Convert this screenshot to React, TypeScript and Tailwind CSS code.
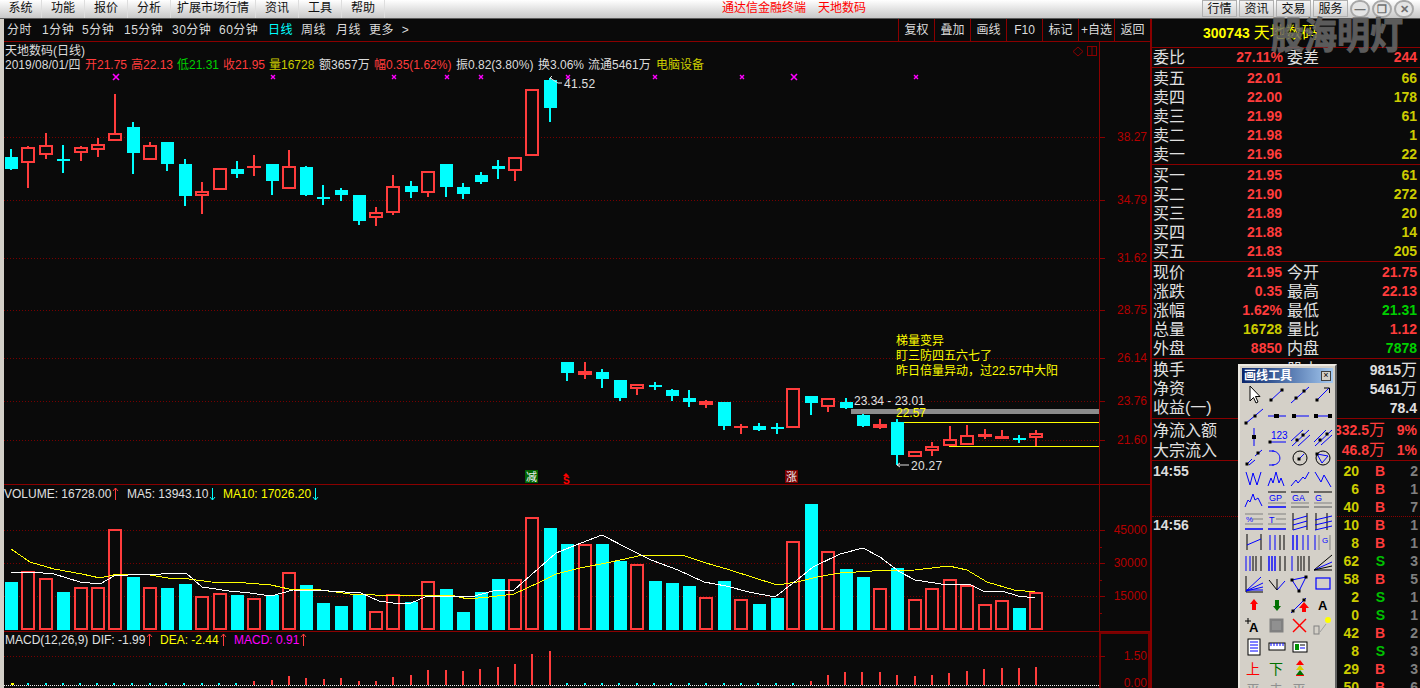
import React from "react";

const RED = "#ff3c3c";
const CYAN = "#00ffff";
const BG = "#0a0a0a";
const GRID = "#8a0000";

type C = [number, number, number, number, number, "u" | "d"];
const candles: C[] = [
  [11, 149, 157, 169, 170, "d"], [28, 146, 147, 163, 188, "u"], [46, 133, 145, 155, 159, "u"], [63, 145, 159, 161, 173, "d"],
  [81, 146, 147, 153, 161, "u"], [98, 138, 144, 150, 157, "u"], [115, 94, 133, 141, 141, "u"], [133, 122, 127, 153, 174, "d"],
  [150, 142, 145, 160, 160, "u"], [167, 142, 142, 164, 171, "d"], [185, 159, 164, 196, 206, "d"], [202, 182, 191, 196, 214, "u"],
  [220, 168, 168, 190, 190, "u"], [237, 161, 169, 174, 178, "d"], [254, 155, 166, 168, 176, "u"], [272, 164, 164, 181, 195, "d"],
  [289, 150, 166, 189, 189, "u"], [306, 166, 167, 195, 196, "d"], [323, 185, 197, 199, 205, "d"], [341, 188, 190, 195, 201, "d"],
  [359, 195, 195, 221, 225, "d"], [376, 207, 212, 218, 226, "u"], [393, 175, 186, 213, 215, "u"], [411, 181, 186, 192, 198, "d"],
  [428, 171, 171, 193, 197, "u"], [446, 164, 164, 187, 197, "d"], [463, 183, 187, 194, 199, "d"], [481, 172, 175, 182, 184, "d"],
  [498, 160, 166, 169, 179, "d"], [515, 157, 157, 171, 181, "u"], [532, 89, 89, 156, 156, "u"], [550, 78, 80, 108, 122, "d"],
  [567, 362, 362, 373, 381, "d"], [585, 362, 371, 375, 379, "u"], [602, 369, 372, 379, 388, "d"], [620, 380, 380, 398, 401, "d"],
  [637, 384, 384, 389, 395, "u"], [655, 382, 385, 387, 390, "d"], [672, 389, 390, 396, 401, "d"], [689, 390, 398, 402, 407, "d"],
  [706, 400, 401, 405, 408, "u"], [724, 402, 402, 426, 430, "d"], [741, 424, 426, 428, 434, "u"], [759, 423, 426, 430, 431, "d"],
  [777, 423, 427, 429, 434, "d"], [793, 388, 388, 428, 428, "u"], [811, 396, 396, 403, 415, "d"], [828, 398, 398, 407, 412, "u"],
  [846, 398, 402, 408, 409, "d"], [863, 414, 415, 426, 427, "d"], [880, 419, 424, 428, 429, "u"], [897, 419, 422, 455, 465, "d"],
  [915, 451, 451, 457, 457, "u"], [932, 442, 446, 451, 456, "u"], [950, 426, 439, 446, 446, "u"], [967, 425, 435, 445, 445, "u"],
  [985, 429, 434, 437, 439, "u"], [1002, 430, 436, 439, 439, "u"], [1019, 435, 438, 440, 443, "d"], [1036, 430, 433, 438, 446, "u"],
];

const volTops = [582, 571, 578, 592, 587, 587, 529, 577, 587, 588, 584, 596, 593, 595, 598, 595, 572, 585, 603, 606, 595, 611, 594, 602, 581, 589, 612, 592, 579, 579, 517, 528, 544, 544, 544, 561, 564, 581, 583, 586, 597, 581, 599, 604, 598, 541, 504, 551, 569, 577, 588, 568, 599, 588, 579, 585, 604, 600, 608, 592];

const white = "11,572 32,572 54,574 80,582 100,584 114,576 143,574 161,574 186,573 202,587 229,591 250,593 271,596 293,590 329,591 361,593 379,601 393,603 411,603 425,597 450,596 471,597 493,591 514,590 539,568 556,553 576,545 602,535 627,548 651,560 678,570 704,582 726,586 749,592 775,597 797,580 813,567 840,554 863,548 880,557 900,572 915,580 941,584 971,585 983,591 1002,591 1018,596 1035,598";
const yellow = "11,549 30,562 54,569 82,574 100,578 118,574 150,575 168,578 189,579 211,582 246,583 271,585 289,589 321,590 350,594 375,595 404,596 429,595 450,595 468,599 489,597 514,594 540,582 556,574 580,568 611,562 643,555 682,555 706,563 730,570 777,585 797,582 817,577 840,573 872,571 915,570 949,566 967,570 987,582 1014,590 1035,592";

const macdRed: [number, number][] = [[254, 681], [272, 680], [289, 676], [306, 678], [324, 679], [341, 678], [359, 681], [376, 681], [393, 677], [411, 675], [428, 670], [446, 670], [463, 671], [480, 669], [498, 667], [515, 664], [532, 654], [550, 651], [811, 681], [828, 675], [845, 672], [862, 672], [880, 672], [897, 675], [915, 676], [932, 675], [949, 673], [967, 671], [984, 669], [1002, 668], [1019, 668], [1036, 667]];
const macdCyan = [28, 46, 63, 80, 97, 114, 132, 150, 166, 184, 202, 219, 236, 567, 585, 602, 619, 637, 654, 671, 689, 706, 724, 741, 758, 776, 793];

function Candle({ c }: { c: C }) {
  const [x, wt, bt, bb, wb, t] = c;
  if (t === "d")
    return (
      <g fill={CYAN}>
        <rect x={x - 1} y={wt} width={2} height={wb - wt} />
        <rect x={x - 6} y={bt} width={13} height={Math.max(bb - bt, 2)} />
      </g>
    );
  return (
    <g>
      <rect x={x - 1} y={wt} width={2} height={wb - wt} fill={RED} />
      {bb - bt <= 4 ? (
        <rect x={x - 7} y={bt} width={14} height={Math.max(bb - bt, 2)} fill={RED} />
      ) : (
        <rect x={x - 6} y={bt + 1} width={12} height={bb - bt - 2} fill={BG} stroke={RED} strokeWidth={2} />
      )}
    </g>
  );
}

function Mark({ x, big }: { x: number; big?: boolean }) {
  const r = big ? 3 : 2;
  return (
    <path d={`M${x - r} ${77 - r}L${x + r} ${77 + r}M${x + r} ${77 - r}L${x - r} ${77 + r}`} stroke="#ff00ff" strokeWidth={big ? 1.6 : 1.4} fill="none" />
  );
}

function Ax({ y, t }: { y: number; t: string }) {
  return (
    <>
      <rect x={1099} y={y} width={6} height={1} fill={GRID} />
      <text x={1147} y={y + 4} textAnchor="end" fontSize={12} fill="#b40000">{t}</text>
    </>
  );
}

function Dots({ y, color = "#760000" }: { y: number; color?: string }) {
  return <line x1={4} x2={1099} y1={y + 0.5} y2={y + 0.5} stroke={color} strokeDasharray="1 2" />;
}

const MainChart = () => (
  <svg viewBox="4 42 1146 442" className="absolute inset-0 w-[1146px] h-[442px]">
    <g shapeRendering="crispEdges">
      {[137, 200, 258, 310, 358, 401, 440].map((y) => <Dots key={y} y={y} />)}
      <rect x={1099} y={42} width={1} height={442} fill={GRID} />
      <rect x={851} y={409} width={248} height={5} fill="#8c8c8c" />
      <rect x={897} y={422} width={202} height={1} fill="#ffff00" />
      <rect x={949} y={446} width={150} height={1} fill="#ffff00" />
      {candles.map((c) => <Candle key={c[0]} c={c} />)}
    </g>
    {[[137, "38.27"], [200, "34.79"], [258, "31.62"], [310, "28.75"], [358, "26.14"], [401, "23.76"], [440, "21.60"]].map(([y, t]) => (
      <Ax key={t as string} y={y as number} t={t as string} />
    ))}
    <path d="M1073 51.5l5 -4.5l5 4.5l-5 4.5z" fill="none" stroke="#8a0000" />
    <rect x={1087.5} y={46.5} width={9} height={9} fill="none" stroke="#8a0000" />
    <line x1={1092} x2={1092} y1={46} y2={56} stroke="#8a0000" />
    {[[116, 1], [273, 0], [394, 0], [447, 0], [481, 0], [568, 0], [655, 0], [742, 0], [794, 1], [916, 0]].map(([x, b]) => (
      <Mark key={x} x={x} big={!!b} />
    ))}
    <path d="M552 79l-2 -1l2 -2M550 78l8 5h4M897 465h12M897 465l3 -2M897 465l3 2" stroke="#e0e0e0" fill="none" />
    <text x={564} y={88} fontSize={12} fill="#e0e0e0" letterSpacing={0.3}>41.52</text>
    <text x={911} y={470} fontSize={12} fill="#e0e0e0" letterSpacing={0.3}>20.27</text>
    <text x={854} y={405} fontSize={12} fill="#e0e0e0">23.34 - 23.01</text>
    <text x={896} y={417} fontSize={12} fill="#ffff00">22.57</text>
    <g fontSize={12} fill="#ffff00">
      <text x={896} y={345}>梯量变异</text>
      <text x={896} y={360}>盯三防四五六七了</text>
      <text x={896} y={375}>昨日倍量异动，过22.57中大阳</text>
    </g>
    <rect x={525} y={470} width={13} height={13} fill="#006400" />
    <text x={526} y={481} fontSize={11} fill="#f0f0f0">减</text>
    <path d="M566 473l-3 3h6z" fill="#ff0000" />
    <text x={563} y={484} fontSize={10} fontWeight={700} fill="#ff0000">S</text>
    <rect x={785} y={470} width={13} height={13} fill="#7a0000" />
    <text x={786} y={481} fontSize={11} fill="#f0f0f0">涨</text>
  </svg>
);

const VolChart = () => (
  <svg viewBox="4 485 1146 146" className="absolute inset-0 w-[1146px] h-[146px]">
    <g shapeRendering="crispEdges">
      {[530, 563, 596].map((y) => <Dots key={y} y={y} />)}
      <rect x={1099} y={485} width={1} height={146} fill={GRID} />
      {[547, 580, 613].map((y) => <rect key={y} x={1099} y={y} width={3} height={1} fill={GRID} />)}
      {candles.map((c, i) => {
        const x = c[0];
        const top = volTops[i];
        return c[5] === "d" ? (
          <rect key={x} x={x - 6} y={top} width={13} height={630 - top} fill={CYAN} />
        ) : (
          <rect key={x} x={x - 6} y={top + 1} width={12} height={629 - top - 1} fill={BG} stroke={RED} strokeWidth={2} />
        );
      })}
      <polyline points={yellow} fill="none" stroke="#ffff00" />
      <polyline points={white} fill="none" stroke="#ffffff" />
    </g>
    <Ax y={530} t="45000" />
    <Ax y={563} t="30000" />
    <Ax y={596} t="15000" />
  </svg>
);

const MacdChart = () => (
  <svg viewBox="4 632 1146 56" className="absolute inset-0 w-[1146px] h-[56px]">
    <g shapeRendering="crispEdges">
      <Dots y={656} />
      <line x1={4} x2={1099} y1={685.5} y2={685.5} stroke="#e8e8e8" strokeDasharray="1 1" />
      <rect x={1099} y={632} width={2} height={56} fill="#7a0000" />
      <rect x={1099} y={632} width={51} height={2} fill="#7a0000" />
      <rect x={1148} y={632} width={2} height={56} fill="#7a0000" />
      {macdRed.map(([x, t]) => <rect key={x} x={x - 1} y={t} width={2} height={685 - t} fill={RED} />)}
      {macdCyan.map((x) => <rect key={x} x={x - 1} y={683} width={2} height={2} fill={CYAN} />)}
      <rect x={11} y={683} width={3} height={2} fill="#ffff00" />
    </g>
    <Ax y={656} t="1.50" />
    <text x={1147} y={687} textAnchor="end" fontSize={12} fill="#b40000">0.00</text>
  </svg>
);

const B = "#0000ff";
const K = "#000000";
const L = (x1: number, y1: number, x2: number, y2: number, c = B, w = 1) => <line x1={x1} y1={y1} x2={x2} y2={y2} stroke={c} strokeWidth={w} />;
const D = (x: number, y: number) => <rect x={x - 1.5} y={y - 1.5} width={3} height={3} fill={K} />;
const P = (d: string, c = B, w = 1) => <path d={d} fill="none" stroke={c} strokeWidth={w} />;
const T = (x: number, y: number, t: string, c = B, s = 9) => <text x={x} y={y} fontSize={s} fill={c}>{t}</text>;

const icons: React.ReactNode[] = [
  <path d="M7 1V16L10.5 12.5L13 18L15 17L12.5 11.5H17Z" fill="#fff" stroke={K} />,
  <>{L(4, 16, 17, 4)}{D(5, 15)}{D(16, 5)}</>,
  <>{L(2, 18, 20, 2)}{D(7, 13)}{D(15, 6)}</>,
  <>{L(4, 16, 17, 3)}{P("M12 3H17.5V8", K)}{D(5, 15)}</>,
  <>{L(2, 18, 20, 3)}{D(3, 17)}{D(12, 10)}</>,
  <>{L(2, 10, 20, 10)}<rect x={8} y={8} width={5} height={4} fill={K} /></>,
  <>{L(5, 10, 20, 10)}<rect x={3} y={8} width={4} height={4} fill={K} /></>,
  <>{L(4, 10, 18, 10)}<rect x={2} y={8} width={4} height={4} fill={K} /><rect x={16} y={8} width={4} height={4} fill={K} /></>,
  <>{L(11, 1, 11, 19)}<rect x={9} y={8} width={4} height={4} fill={K} /></>,
  <>{T(5, 12, "123", B, 10)}{L(4, 15, 20, 15)}{D(4, 15)}</>,
  <>{L(2, 14, 14, 3)}{L(3, 19, 20, 3)}{L(9, 19, 21, 8)}{D(8, 13)}{D(14, 8)}</>,
  <>{L(2, 15, 14, 3)}{L(3, 19, 20, 3)}{L(9, 18, 20, 8)}{D(8, 13)}{D(15, 7)}</>,
  <>{L(3, 17, 9, 11)}{L(12, 8, 19, 2)}{L(6, 17, 12, 12)}{D(4, 16)}{D(15, 5)}</>,
  <>{P("M6 3C16 3 17 17 6 17")}{L(3, 17, 8, 17)}{L(3, 3, 8, 3)}</>,
  <><circle cx={11} cy={10} r={7} fill="none" stroke={K} />{L(10, 11, 15, 6)}{D(10, 11)}</>,
  <><circle cx={11} cy={10} r={7} fill="none" stroke={K} />{P("M5 6L16 8L10 15Z")}{D(5, 6)}</>,
  <>{P("M3 3L7 16L10 4L14 16L18 3")}</>,
  <>{P("M2 17L5 9L7 14L10 3L13 14L15 9L18 17")}</>,
  <>{P("M2 17L7 11L9 14L14 8L16 10L20 3")}</>,
  <>{P("M3 3L9 13L12 6L19 18")}</>,
  <>{P("M2 17L5 10L7 12L10 4L12 10L15 8L19 16")}</>,
  <>{L(2, 2, 20, 2, K)}{T(3, 11, "GP")}{L(2, 13, 20, 13, "#808080")}{L(2, 17, 20, 17, B, 1.5)}</>,
  <>{L(2, 2, 20, 2, K)}{T(3, 11, "GA")}{L(2, 13, 20, 13, "#808080")}{L(2, 17, 20, 17, "#808080", 1.5)}</>,
  <>{L(2, 2, 20, 2, K)}{T(3, 11, "G")}{L(2, 13, 20, 13, "#808080")}{L(2, 17, 20, 17, "#808080", 1.5)}</>,
  <>{L(2, 3, 20, 3, "#808080")}{T(3, 11, "%", B, 8)}{L(10, 8, 20, 8, "#808080")}{L(2, 13, 20, 13, "#808080")}{L(2, 18, 20, 18, B, 1.5)}</>,
  <>{L(2, 3, 20, 3, "#808080")}{T(3, 12, "T", B, 9)}{L(10, 8, 20, 8, "#808080")}{L(2, 13, 20, 13, "#808080")}{L(2, 18, 20, 18, B, 1.5)}</>,
  <>{L(4, 2, 4, 19, K)}{L(18, 2, 18, 19, K)}{L(4, 9, 18, 5, B)}{L(4, 14, 18, 10, B)}{L(4, 19, 18, 15, B)}</>,
  <>{L(4, 2, 4, 19, K)}{L(15, 2, 15, 19, K)}{L(3, 9, 20, 5, B)}{L(3, 14, 20, 10, B)}{L(3, 19, 20, 15, B)}</>,
  <>{L(4, 2, 4, 18, K)}{L(18, 2, 18, 18, K)}{L(4, 13, 18, 7, B)}</>,
  <>{L(4, 3, 4, 18)}{L(9, 3, 9, 18)}{L(14, 3, 14, 18, K)}{L(18, 3, 18, 18, K)}</>,
  <>{L(4, 3, 4, 18, B, 1.4)}{L(8, 3, 8, 18, B, 1.4)}{L(14, 3, 14, 18, B)}{L(19, 3, 19, 18)}</>,
  <>{L(3, 3, 3, 18, B)}{L(7, 3, 7, 18, "#808080")}{T(10, 11, "G", B, 8)}{L(18, 3, 18, 18, "#808080")}</>,
  <>{L(3, 3, 3, 18)}{L(7, 3, 7, 18)}{L(10, 3, 10, 18, K)}{L(13, 3, 13, 18, K)}{L(18, 3, 18, 18, K)}</>,
  <>{L(3, 3, 3, 18, B, 1.4)}{L(6, 3, 6, 18, B, 1.4)}{L(9, 3, 9, 18, B, 1.4)}{L(14, 3, 14, 18, K)}{L(19, 3, 19, 18, K)}</>,
  <>{L(3, 3, 3, 18)}{L(9, 3, 9, 18, K)}{L(12, 3, 12, 18, K)}{L(15, 3, 15, 18, K)}{L(20, 3, 20, 18, K)}</>,
  <>{L(2, 17, 20, 2, K)}{L(2, 17, 20, 9, B)}{L(2, 17, 20, 13, K)}{L(2, 17, 20, 17, K)}</>,
  <>{L(3, 2, 3, 18, K)}{L(3, 18, 20, 18, K)}{L(3, 16, 20, 16, B)}{L(3, 17, 18, 3, B)}{L(3, 17, 20, 9, B)}{L(3, 17, 20, 13, B)}</>,
  <>{L(3, 6, 11, 16, K)}{L(11, 16, 19, 7, B)}{L(11, 5, 11, 16, K)}</>,
  <>{P("M3 6L17 3L10 17Z")}{D(3, 6)}{D(17, 3)}{D(10, 17)}</>,
  <rect x={4} y={4} width={14} height={11} fill="none" stroke={B} strokeWidth={1.2} />,
  <><path d="M11 4L15 9H13V15H9V9H7Z" fill="#ff0000" /></>,
  <><path d="M11 16L15 11H13V5H9V11H7Z" fill="#007000" /></>,
  <>{L(2, 18, 17, 3, B)}{D(4, 16)}{D(15, 5)}<path d="M15 7L20 13H17V17H13V13H10Z" fill="#ff0000" /></>,
  <text x={6} y={15} fontSize={13} fontWeight={700} fill={K}>A</text>,
  <><text x={6} y={16} fontSize={13} fontWeight={700} fill={K}>A</text>{P("M2 5H8M5 2V8", K)}</>,
  <><rect x={4.5} y={3.5} width={12} height={12} fill="#808080" stroke="#808080" strokeWidth={2} /><rect x={6} y={5} width={9} height={9} fill="#909090" /></>,
  <>{L(4, 3, 17, 16, "#ff0000", 1.5)}{L(17, 3, 4, 16, "#ff0000", 1.5)}</>,
  <><circle cx={16} cy={4} r={3} fill="#ffff00" /><rect x={2} y={10} width={5} height={8} fill="#d4d0c8" stroke="#808080" />{L(8, 16, 14, 8, "#a0a0a0")}</>,
  <><rect x={5} y={2} width={12} height={16} fill="#fff" stroke={K} />{L(7, 5, 15, 5)}{L(7, 8, 15, 8)}{L(7, 11, 15, 11)}{L(7, 14, 15, 14)}</>,
  <><rect x={3} y={6} width={16} height={7} fill="#fff" stroke={K} />{P("M5 6V9M8 6V9M11 6V9M14 6V9M17 6V9")}</>,
  <><rect x={4} y={5} width={14} height={10} fill="#fff" stroke={K} /><rect x={6} y={7} width={4} height={6} fill="#009000" />{L(11, 8, 16, 8, K)}{L(11, 11, 16, 11, B)}</>,
  null,
  <text x={3} y={16} fontSize={14} fill="#ff0000">上</text>,
  <text x={3} y={16} fontSize={14} fill="#007000">下</text>,
  <><path d="M11 2L15 7H7Z" fill="#ff0000" /><path d="M11 7L15 12H7Z" fill="#d8d000" /><path d="M11 12L15 17H7Z" fill="#007000" /><rect x={7} y={17} width={8} height={1} fill="#ff0000" /></>,
  null,
  <text x={3} y={16} fontSize={14} fill="#909090">平</text>,
  <text x={3} y={16} fontSize={14} fill="#909090">击</text>,
  <text x={3} y={16} fontSize={14} fill="#909090">平</text>,
  null,
];

const Toolbar = () => (
  <div className="absolute left-[1238px] top-[364px] w-[99px] h-[330px] bg-[#d4d0c8] border-2 border-t-[#ece9e2] border-l-[#ece9e2] border-r-[#606060] border-b-[#606060] p-[2px]">
    <div className="h-[15px] flex items-center justify-between bg-gradient-to-r from-[#0a246a] to-[#a6caf0] pl-[2px] pr-[2px]">
      <span className="text-white text-[12px] leading-none font-bold">画线工具</span>
      <span className="w-[10px] h-[10px] bg-[#d4d0c8] border border-[#404040] flex items-center justify-center text-[9px] leading-none text-black">×</span>
    </div>
    <div className="grid grid-cols-[repeat(4,23px)] auto-rows-[21px] mt-[1px]">
      {icons.map((ic, i) => (
        <div key={i} className="flex items-center justify-center">
          {ic && <svg viewBox="0 0 22 20" className="w-[22px] h-[20px]">{ic}</svg>}
        </div>
      ))}
    </div>
  </div>
);

const Tab = ({ w, t, on }: { w: string; t: string; on?: boolean }) => (
  <span className={`${w} shrink-0 tracking-[0.5px] whitespace-pre ${on ? "text-[#00ffff]" : "text-[#dcdcdc]"}`}>{t}</span>
);

const TabBar = () => (
  <div className="h-[23px] shrink-0 flex items-stretch border-b border-[#8a0000] text-[12px] leading-[22px]">
    <div className="flex-1 flex pl-[3px]">
      <Tab w="w-[35px]" t="分时" />
      <Tab w="w-[40px]" t="1分钟" />
      <Tab w="w-[42px]" t="5分钟" />
      <Tab w="w-[48px]" t="15分钟" />
      <Tab w="w-[47px]" t="30分钟" />
      <Tab w="w-[49px]" t="60分钟" />
      <Tab w="w-[33px]" t="日线" on />
      <Tab w="w-[35px]" t="周线" />
      <Tab w="w-[33px]" t="月线" />
      <Tab w="w-[50px]" t="更多  >" />
    </div>
    {["复权", "叠加", "画线", "F10", "标记", "+自选", "返回"].map((t) => (
      <span key={t} className="w-[36px] text-center border-l border-[#8a0000] text-[#dcdcdc] text-[12px]">{t}</span>
    ))}
  </div>
);

const TitleBar = () => (
  <div className="h-[19px] shrink-0 flex items-stretch bg-gradient-to-b from-[#ffffff] to-[#c8c8c8] border-b border-[#5a5a5a] text-[12px] leading-[17px] text-[#111]">
    <div className="flex">
      {[["w-[42px]", "系统"], ["w-[43px]", "功能"], ["w-[43px]", "报价"], ["w-[43px]", "分析"], ["w-[85px]", "扩展市场行情"], ["w-[43px]", "资讯"], ["w-[43px]", "工具"], ["w-[43px]", "帮助"]].map(([w, t]) => (
        <span key={t} className={`${w} text-center border-r border-[#dedede]`}>{t}</span>
      ))}
    </div>
    <div className="flex-1 pl-[337px] text-[#ff0000] whitespace-nowrap">通达信金融终端<span className="ml-[12px]">天地数码</span></div>
    <div className="flex gap-[2px] items-start mr-[2px]">
      {["行情", "资讯", "交易", "服务"].map((t) => (
        <span key={t} className="w-[35px] h-[17px] text-center border border-[#b0b0b0] bg-gradient-to-b from-[#f4f4f4] to-[#d0d0d0]">{t}</span>
      ))}
    </div>
    <div className="flex gap-[2px] items-start mr-[6px]">
      {["—", "❐", "✕"].map((t) => (
        <span key={t} className="w-[20px] h-[18px] rounded-full border-2 border-[#a8a8a8] bg-[#e4e4e4] text-[#707070] text-[11px] leading-[14px] text-center font-bold">{t}</span>
      ))}
    </div>
  </div>
);

const Leg = ({ w, k, v, c }: { w: string; k: string; v: string; c: string }) => (
  <span className={`${w} shrink-0 whitespace-nowrap ${c}`}>{k}{v}</span>
);

const Legend = () => (
  <div className="absolute left-[1px] top-[2px] text-[12px] leading-[14px] text-[#dcdcdc]">
    <div>天地数码(日线)</div>
    <div className="flex">
      <span className="w-[80px] shrink-0">2019/08/01/四</span>
      <Leg w="w-[46px]" k="开" v="21.75" c="text-[#ff3c3c]" />
      <Leg w="w-[46px]" k="高" v="22.13" c="text-[#ff3c3c]" />
      <Leg w="w-[46px]" k="低" v="21.31" c="text-[#00d000]" />
      <Leg w="w-[46px]" k="收" v="21.95" c="text-[#ff3c3c]" />
      <Leg w="w-[50px]" k="量" v="16728" c="text-[#cccc00]" />
      <Leg w="w-[55px]" k="额" v="3657万" c="text-[#dcdcdc]" />
      <Leg w="w-[82px]" k="幅" v="0.35(1.62%)" c="text-[#ff3c3c]" />
      <span className="w-[82px] shrink-0">振0.82(3.80%)</span>
      <span className="w-[50px] shrink-0">换3.06%</span>
      <span className="w-[68px] shrink-0">流通5461万</span>
      <span className="w-[50px] shrink-0 text-[#cccc00]">电脑设备</span>
    </div>
  </div>
);

const Arrow = ({ c, up }: { c: string; up?: boolean }) => (
  <svg viewBox="0 0 7 14" className={`inline-block w-[7px] h-[14px] ml-[1px] align-[-3px] ${c}`}>
    <path d={up ? "M3.5 1V13M1 4L3.5 1L6 4" : "M3.5 1V13M1 10L3.5 13L6 10"} fill="none" stroke="currentColor" />
  </svg>
);

const Quote = ({ k, v, q }: { k: string; v: string; q: string }) => (
  <div className="h-[19px] flex items-center">
    <span className="w-[48px] text-[16px] text-[#e0e0e0] leading-[19px]">{k}</span>
    <span className="w-[81px] text-right font-bold text-[14px] text-[#ff3c3c]">{v}</span>
    <span className="flex-1 text-right font-bold text-[14px] text-[#cccc00]">{q}</span>
  </div>
);

const Stat = ({ k, v, vc, k2, v2, vc2 }: { k: string; v: string; vc: string; k2: string; v2: string; vc2: string }) => (
  <div className="h-[19px] flex items-center">
    <span className="w-[40px] text-[16px] text-[#e0e0e0] leading-[19px]">{k}</span>
    <span className={`w-[89px] text-right font-bold text-[14px] ${vc}`}>{v}</span>
    <span className="ml-[5px] text-[16px] text-[#e0e0e0] leading-[19px]">{k2}</span>
    <span className={`flex-1 text-right font-bold text-[14px] ${vc2}`}>{v2}</span>
  </div>
);

const Div = ({ children }: { children: React.ReactNode }) => (
  <div className="border-b border-[#8a0000] pl-[1px] pr-[3px] shrink-0">{children}</div>
);

const trades: [string, string, string, string][] = [
  ["14:55", "20", "B", "2"], ["", "6", "B", "1"], ["", "40", "B", "7"], ["14:56", "10", "B", "1"], ["", "8", "B", "1"], ["", "62", "S", "3"], ["", "58", "B", "5"],
  ["", "2", "S", "1"], ["", "0", "S", "1"], ["", "42", "B", "2"], ["", "8", "S", "3"], ["", "29", "B", "3"], ["", "50", "B", "6"],
];

const RightPanel = () => (
  <div className="w-[270px] shrink-0 border-l-2 border-[#8a0000] flex flex-col overflow-hidden">
    <div className="h-[29px] shrink-0 border-b border-[#8a0000] flex items-center pl-[51px] text-[14px] whitespace-nowrap">
      <span className="font-bold text-[#ffff00]">300743</span>
      <span className="ml-[4px] text-[16px] text-[#ffff00]">天地数码</span>
    </div>
    <Div>
      <div className="h-[19px] flex items-center">
        <span className="w-[40px] text-[16px] text-[#e0e0e0] leading-[19px]">委比</span>
        <span className="w-[90px] text-right font-bold text-[14px] text-[#ff3c3c]">27.11%</span>
        <span className="ml-[4px] text-[16px] text-[#e0e0e0] leading-[19px]">委差</span>
        <span className="flex-1 text-right font-bold text-[14px] text-[#ff3c3c]">244</span>
      </div>
    </Div>
    <Div>
      <div className="pt-[1px] h-[96px]">
        <Quote k="卖五" v="22.01" q="66" />
        <Quote k="卖四" v="22.00" q="178" />
        <Quote k="卖三" v="21.99" q="61" />
        <Quote k="卖二" v="21.98" q="1" />
        <Quote k="卖一" v="21.96" q="22" />
      </div>
    </Div>
    <Div>
      <div className="pt-[1px] h-[96px]">
        <Quote k="买一" v="21.95" q="61" />
        <Quote k="买二" v="21.90" q="272" />
        <Quote k="买三" v="21.89" q="20" />
        <Quote k="买四" v="21.88" q="14" />
        <Quote k="买五" v="21.83" q="205" />
      </div>
    </Div>
    <Div>
      <div className="pt-[1px] h-[96px]">
        <Stat k="现价" v="21.95" vc="text-[#ff3c3c]" k2="今开" v2="21.75" vc2="text-[#ff3c3c]" />
        <Stat k="涨跌" v="0.35" vc="text-[#ff3c3c]" k2="最高" v2="22.13" vc2="text-[#ff3c3c]" />
        <Stat k="涨幅" v="1.62%" vc="text-[#ff3c3c]" k2="最低" v2="21.31" vc2="text-[#00d000]" />
        <Stat k="总量" v="16728" vc="text-[#cccc00]" k2="量比" v2="1.12" vc2="text-[#ff3c3c]" />
        <Stat k="外盘" v="8850" vc="text-[#ff3c3c]" k2="内盘" v2="7878" vc2="text-[#00d000]" />
      </div>
    </Div>
    <Div>
      <div className="h-[59px] pt-[1px]">
        {[["换手", "3.06%", "股本", "9815", "万"], ["净资", "5.07", "流通", "5461", "万"], ["收益(一)", "0.07", "PE", "78.4", ""]].map(([a, b, c, d, e]) => (
          <div key={a} className="h-[19px] flex items-center">
            <span className="w-[40px] text-[16px] text-[#e0e0e0] leading-[19px] whitespace-nowrap">{a}</span>
            <span className="w-[89px] text-right font-bold text-[14px] text-[#e0e0e0]">{b}</span>
            <span className="ml-[5px] text-[16px] text-[#e0e0e0] leading-[19px]">{c}</span>
            <span className="flex-1 text-right font-bold text-[14px] text-[#e0e0e0]">{d}<span className="text-[16px] font-normal">{e}</span></span>
          </div>
        ))}
      </div>
    </Div>
    <Div>
      <div className="h-[41px] pt-[1px]">
        {[["净流入额", "1332.5", "9%"], ["大宗流入", "46.8", "1%"]].map(([a, b, c]) => (
          <div key={a} className="h-[20px] flex items-center">
            <span className="w-[90px] text-[16px] text-[#e0e0e0] leading-[19px]">{a}</span>
            <span className="w-[142px] text-right font-bold text-[14px] text-[#ff3c3c]">{b}<span className="text-[16px] font-normal">万</span></span>
            <span className="flex-1 text-right font-bold text-[14px] text-[#ff3c3c]">{c}</span>
          </div>
        ))}
      </div>
    </Div>
    <div className="relative pl-[1px] pr-[2px] pt-[1px] flex-1">
      <div className="absolute left-0 right-0 top-[55px] border-t border-dotted border-[#8a0000]" />
      {trades.map(([t, q, s, n], i) => (
        <div key={i} className="relative h-[18px] flex items-center font-bold text-[14px]">
          <span className="w-[84px] text-[#dcdcdc]">{t}</span>
          <span className="w-[122px] text-right text-[#cccc00]">{q}</span>
          <span className={`w-[26px] text-right ${s === "B" ? "text-[#ff3c3c]" : "text-[#00c000]"}`}>{s}</span>
          <span className="flex-1 text-right text-[#808080]">{n}</span>
        </div>
      ))}
    </div>
  </div>
);

export default function App() {
  return (
    <div className="relative w-[1420px] h-[688px] overflow-hidden flex flex-col bg-[#0a0a0a] font-['Liberation_Sans','Noto_Sans_CJK_SC',sans-serif]">
      <TitleBar />
      <div className="flex-1 min-h-0 flex">
        <div className="w-[4px] shrink-0 bg-[#d4d0c8]" />
        <div className="w-[1146px] shrink-0 flex flex-col">
          <TabBar />
          <div className="relative h-[443px] shrink-0 border-b border-[#8a0000]">
            <MainChart />
            <Legend />
          </div>
          <div className="relative h-[147px] shrink-0 border-b border-[#8a0000]">
            <VolChart />
            <div className="absolute left-0 top-[2px] text-[12px] leading-[14px] text-[#e0e0e0] flex whitespace-nowrap">
              <span className="w-[123px] shrink-0">VOLUME: 16728.00<Arrow c="text-[#ff3c3c]" up /></span>
              <span className="w-[96px] shrink-0">MA5: 13943.10<Arrow c="text-[#00ffff]" /></span>
              <span className="text-[#ffff00]">MA10: 17026.20<Arrow c="text-[#00ffff]" /></span>
            </div>
          </div>
          <div className="relative flex-1 min-h-0">
            <MacdChart />
            <div className="absolute left-[1px] top-[1px] text-[12px] leading-[14px] text-[#e0e0e0] flex whitespace-nowrap">
              <span className="w-[87px] shrink-0">MACD(12,26,9)</span>
              <span className="w-[68px] shrink-0">DIF: -1.99<Arrow c="text-[#ff3c3c]" up /></span>
              <span className="w-[74px] shrink-0 text-[#ffff00]">DEA: -2.44<Arrow c="text-[#ff3c3c]" up /></span>
              <span className="text-[#ff00ff]">MACD: 0.91<Arrow c="text-[#ff3c3c]" up /></span>
            </div>
          </div>
        </div>
        <RightPanel />
      </div>
      <Toolbar />
      <div className="absolute left-[1271px] top-[14px] origin-top scale-y-[1.12] text-[33px] leading-[40px] font-bold text-[#6a6a6a]/85 [-webkit-text-stroke:1px_#5c5c5c] whitespace-nowrap">股海明灯</div>
    </div>
  );
}
